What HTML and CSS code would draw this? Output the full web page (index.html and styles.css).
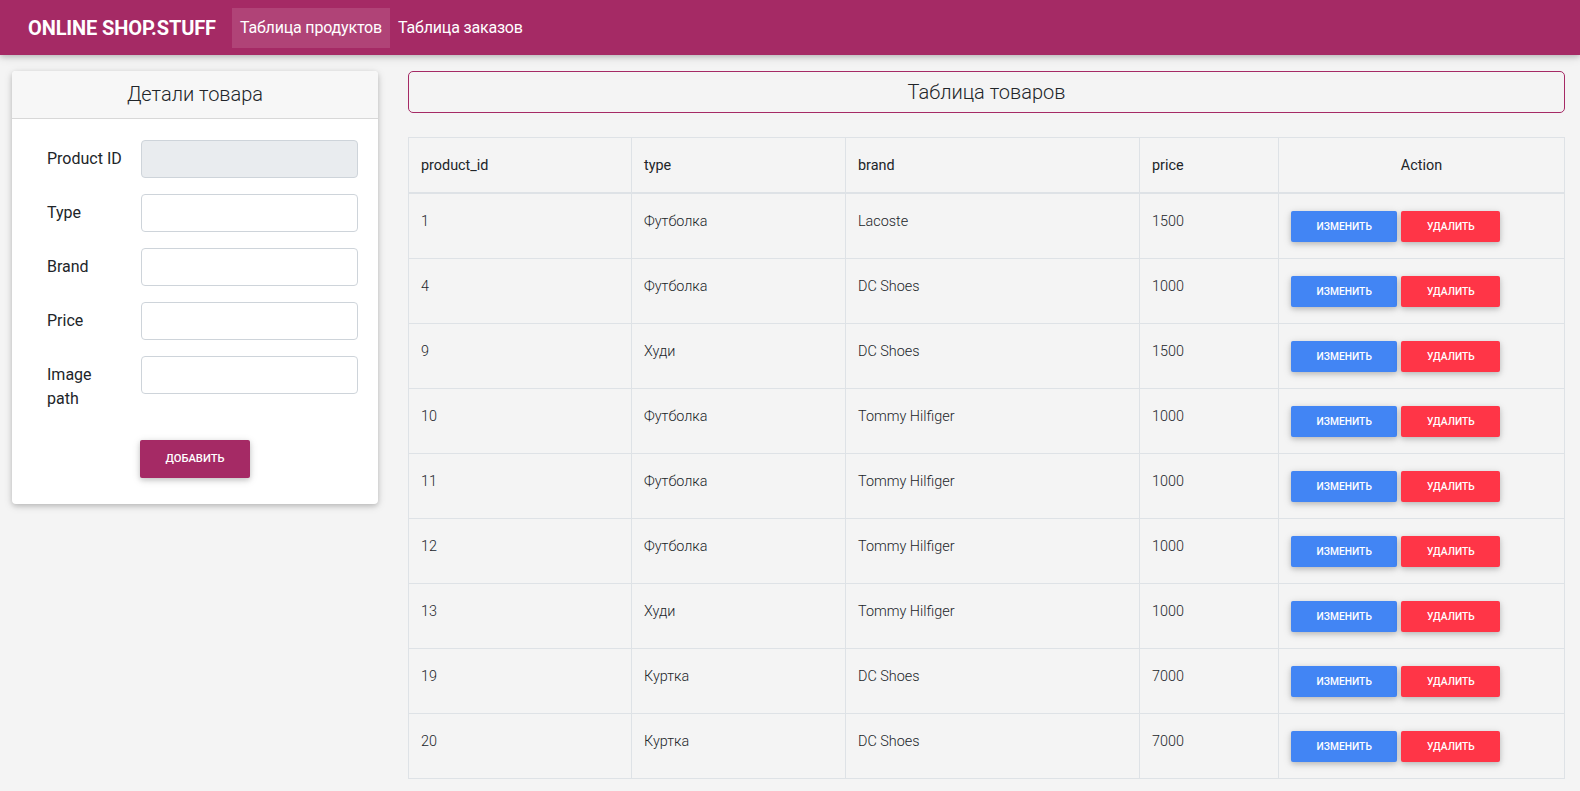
FILE: index.html
```html
<!DOCTYPE html>
<html lang="ru">
<head>
<meta charset="utf-8">
<title>Online Shop.Stuff</title>
<link rel="stylesheet" href="styles.css">
</head>
<body>
<nav class="navbar">
  <a class="brand" href="#">ONLINE SHOP.STUFF</a>
  <a class="nav-link active" href="#">Таблица продуктов</a>
  <a class="nav-link" href="#">Таблица заказов</a>
</nav>
<div class="main">
  <div class="card">
    <div class="card-header">Детали товара</div>
    <div class="card-body">
      <div class="form-row">
        <label class="form-label">Product ID</label>
        <input class="form-input" type="text" disabled>
      </div>
      <div class="form-row">
        <label class="form-label">Type</label>
        <input class="form-input" type="text">
      </div>
      <div class="form-row">
        <label class="form-label">Brand</label>
        <input class="form-input" type="text">
      </div>
      <div class="form-row">
        <label class="form-label">Price</label>
        <input class="form-input" type="text">
      </div>
      <div class="form-row">
        <label class="form-label">Image path</label>
        <input class="form-input" type="text">
      </div>
      <div class="form-actions">
        <button class="btn btn-add">Добавить</button>
      </div>
    </div>
  </div>
  <div class="content">
    <div class="title-box">Таблица товаров</div>
    <table class="table">
      <colgroup>
        <col class="c1"><col class="c2"><col class="c3"><col class="c4"><col class="c5">
      </colgroup>
      <thead>
        <tr><th>product_id</th><th>type</th><th>brand</th><th>price</th><th class="center">Action</th></tr>
      </thead>
      <tbody>
        <tr><td>1</td><td>Футболка</td><td>Lacoste</td><td>1500</td><td><div class="actions"><button class="btn btn-sm btn-edit">Изменить</button><button class="btn btn-sm btn-del">Удалить</button></div></td></tr>
        <tr><td>4</td><td>Футболка</td><td>DC Shoes</td><td>1000</td><td><div class="actions"><button class="btn btn-sm btn-edit">Изменить</button><button class="btn btn-sm btn-del">Удалить</button></div></td></tr>
        <tr><td>9</td><td>Худи</td><td>DC Shoes</td><td>1500</td><td><div class="actions"><button class="btn btn-sm btn-edit">Изменить</button><button class="btn btn-sm btn-del">Удалить</button></div></td></tr>
        <tr><td>10</td><td>Футболка</td><td>Tommy Hilfiger</td><td>1000</td><td><div class="actions"><button class="btn btn-sm btn-edit">Изменить</button><button class="btn btn-sm btn-del">Удалить</button></div></td></tr>
        <tr><td>11</td><td>Футболка</td><td>Tommy Hilfiger</td><td>1000</td><td><div class="actions"><button class="btn btn-sm btn-edit">Изменить</button><button class="btn btn-sm btn-del">Удалить</button></div></td></tr>
        <tr><td>12</td><td>Футболка</td><td>Tommy Hilfiger</td><td>1000</td><td><div class="actions"><button class="btn btn-sm btn-edit">Изменить</button><button class="btn btn-sm btn-del">Удалить</button></div></td></tr>
        <tr><td>13</td><td>Худи</td><td>Tommy Hilfiger</td><td>1000</td><td><div class="actions"><button class="btn btn-sm btn-edit">Изменить</button><button class="btn btn-sm btn-del">Удалить</button></div></td></tr>
        <tr><td>19</td><td>Куртка</td><td>DC Shoes</td><td>7000</td><td><div class="actions"><button class="btn btn-sm btn-edit">Изменить</button><button class="btn btn-sm btn-del">Удалить</button></div></td></tr>
        <tr><td>20</td><td>Куртка</td><td>DC Shoes</td><td>7000</td><td><div class="actions"><button class="btn btn-sm btn-edit">Изменить</button><button class="btn btn-sm btn-del">Удалить</button></div></td></tr>
      </tbody>
    </table>
  </div>
</div>
</body>
</html>
```
FILE: styles.css
```css
* { box-sizing: border-box; }

body {
  margin: 0;
  font-family: Roboto, "Noto Sans", "Liberation Sans", sans-serif;
  background: #f4f4f4;
  color: #212529;
}

.navbar {
  height: 55px;
  background: #a52a65;
  display: flex;
  align-items: center;
  padding: 0 16px 0 28px;
  box-shadow: 0 2px 5px 0 rgba(0,0,0,.16), 0 2px 10px 0 rgba(0,0,0,.12);
  position: relative;
  z-index: 2;
}

.brand {
  color: #fff;
  text-decoration: none;
  font-size: 20px;
  font-weight: 700;
  margin-right: 16px;
  line-height: 30px;
  letter-spacing: -0.12px;
}

.nav-link {
  color: #fff;
  text-decoration: none;
  font-size: 16px;
  font-weight: 400;
  line-height: 24px;
  padding: 8px;
  letter-spacing: -0.18px;
}

.nav-link.active {
  background: rgba(255,255,255,.12);
}

.main {
  display: flex;
  align-items: flex-start;
  gap: 30px;
  padding: 16px 15px 0 12px;
}

.card {
  width: 366px;
  flex: none;
  background: #fff;
  border-radius: 4px;
  box-shadow: 0 2px 5px 0 rgba(0,0,0,.16), 0 2px 10px 0 rgba(0,0,0,.12);
  overflow: hidden;
}

.card-header {
  background: #f7f7f7;
  border-bottom: 1px solid rgba(0,0,0,.125);
  padding: 11px 20px 12px;
  text-align: center;
  font-size: 20px;
  font-weight: 300;
  line-height: 24px;
}

.card-body {
  padding: 21px 20px 20px 35px;
}

.form-row {
  display: flex;
  align-items: flex-start;
  margin-bottom: 16px;
}

.form-label {
  width: 76px;
  margin-right: 18px;
  flex: none;
  font-size: 16px;
  line-height: 24px;
  padding: 7px 0;
}

.form-input {
  flex: 1;
  min-width: 0;
  height: 38px;
  border: 1px solid #ced4da;
  border-radius: 4px;
  background: #fff;
  font-family: inherit;
  font-size: 16px;
  padding: 6px 12px;
}

.form-input:disabled {
  background: #e9ecef;
}

.form-actions {
  display: flex;
  justify-content: center;
  margin-left: -15px;
}

.btn {
  border: 0;
  border-radius: 2px;
  color: #fff;
  text-transform: uppercase;
  font-family: inherit;
  font-weight: 500;
  box-shadow: 0 2px 5px 0 rgba(0,0,0,.16), 0 2px 10px 0 rgba(0,0,0,.12);
  cursor: pointer;
}

.btn-add {
  background: #a52a65;
  height: 38px;
  padding: 0 25.6px;
  font-size: 11.2px;
  line-height: 16.8px;
  margin: 6px;
}

.content {
  flex: 1;
  min-width: 0;
}

.title-box {
  height: 42px;
  border: 1px solid #a52a65;
  border-radius: 5px;
  text-align: center;
  font-size: 20px;
  font-weight: 300;
  line-height: 40px;
  margin-bottom: 24px;
}

.table {
  width: 100%;
  border-collapse: collapse;
  table-layout: fixed;
  border: 1px solid #dee2e6;
  font-size: 14.4px;
}

.c1 { width: 223px; }
.c2 { width: 214px; }
.c3 { width: 294px; }
.c4 { width: 139px; }
.c5 { width: auto; }

.table th {
  text-align: left;
  font-weight: 400;
  padding: 17px 12px 16px;
  line-height: 21px;
  border: 1px solid #dee2e6;
  border-bottom: 2px solid #dee2e6;
  vertical-align: top;
}

.table th.center { text-align: center; }

.table td {
  font-weight: 300;
  padding: 17px 12px 16px;
  line-height: 21.6px;
  border: 1px solid #dee2e6;
  vertical-align: top;
}

.actions {
  display: flex;
  gap: 4px;
}

.btn-sm {
  height: 31px;
  padding: 0 25.6px;
  font-size: 10.24px;
  line-height: 15px;
}

.btn-edit { background: #4285f4; }
.btn-del { background: #ff3547; }
```
